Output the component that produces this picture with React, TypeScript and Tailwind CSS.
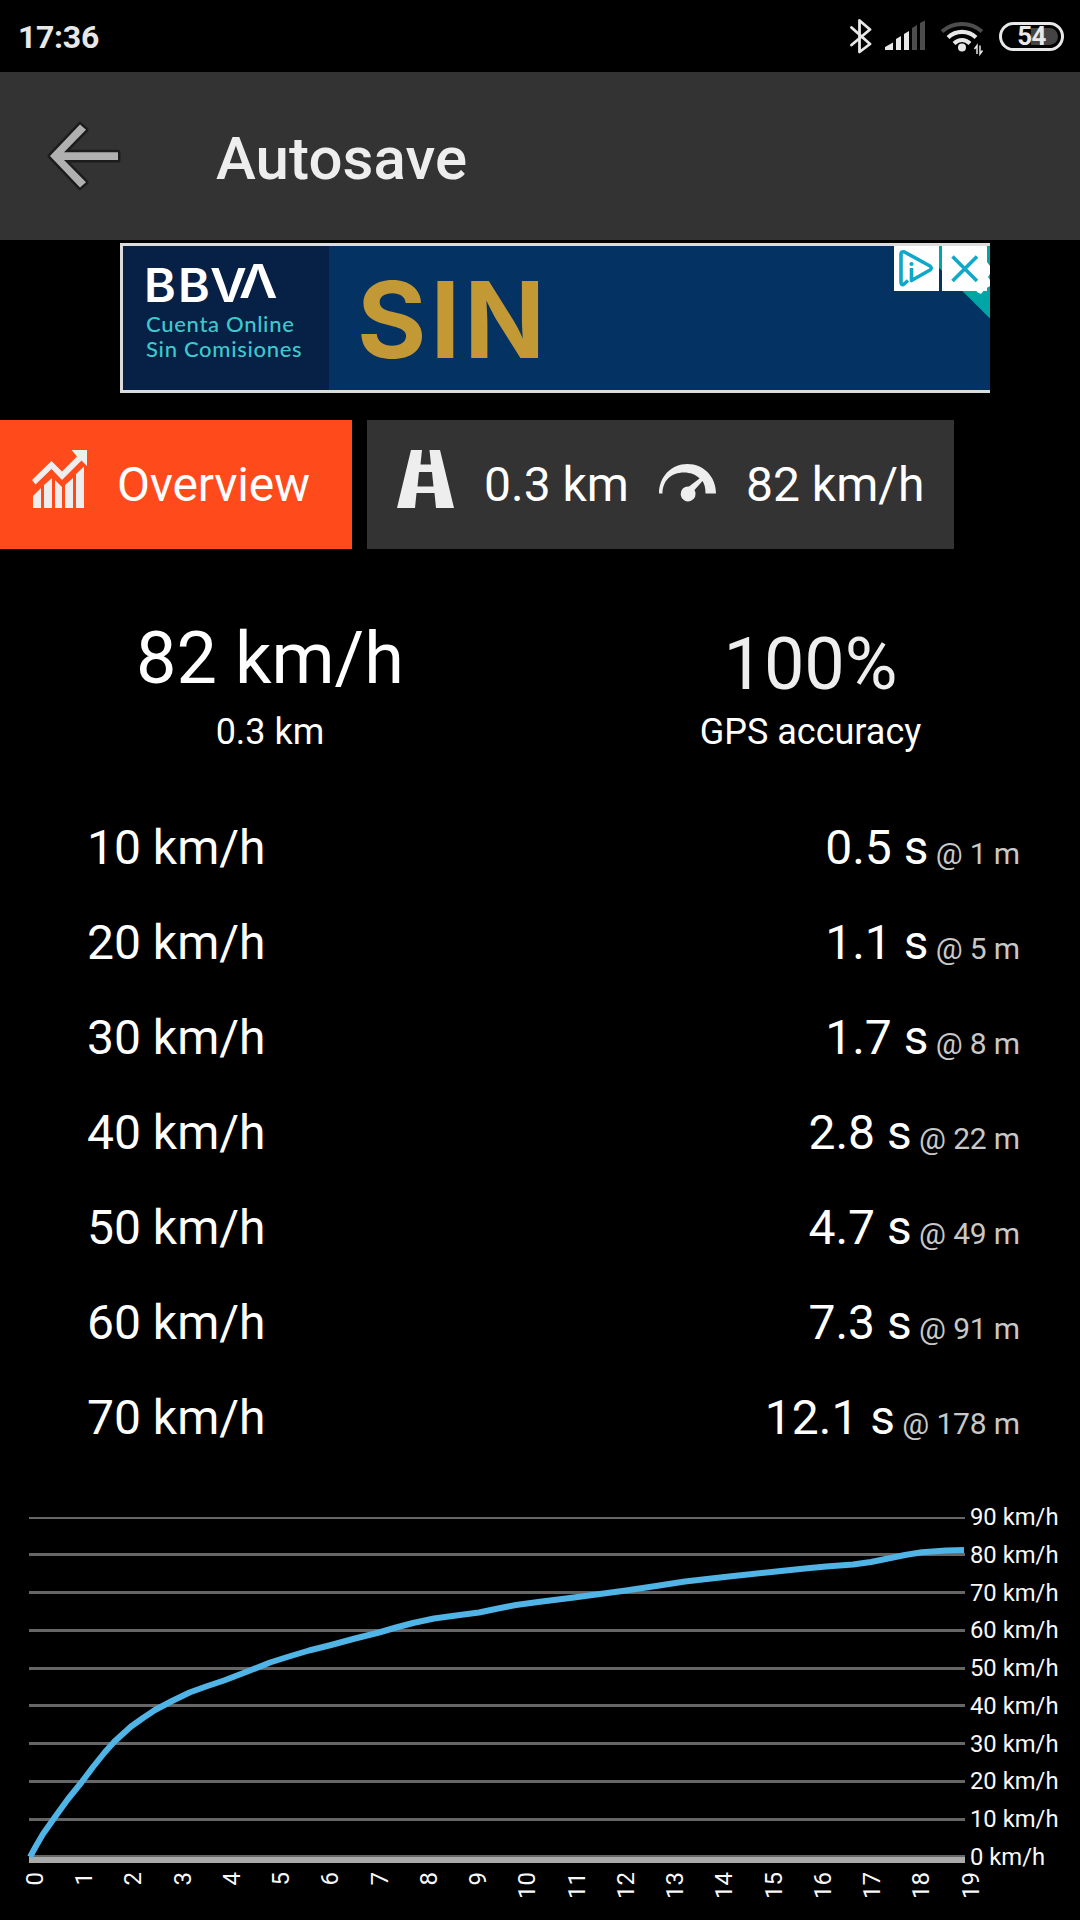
import React from 'react';

const SPLITS = [
  { speed: '10 km/h', time: '0.5 s', distance: '1 m' },
  { speed: '20 km/h', time: '1.1 s', distance: '5 m' },
  { speed: '30 km/h', time: '1.7 s', distance: '8 m' },
  { speed: '40 km/h', time: '2.8 s', distance: '22 m' },
  { speed: '50 km/h', time: '4.7 s', distance: '49 m' },
  { speed: '60 km/h', time: '7.3 s', distance: '91 m' },
  { speed: '70 km/h', time: '12.1 s', distance: '178 m' },
];

// y = top edge of the grid line inside the chart
const GRID = [
  { label: '90 km/h', y: 17, h: 2 },
  { label: '80 km/h', y: 53, h: 3 },
  { label: '70 km/h', y: 91, h: 3 },
  { label: '60 km/h', y: 129, h: 3 },
  { label: '50 km/h', y: 167, h: 3 },
  { label: '40 km/h', y: 204, h: 3 },
  { label: '30 km/h', y: 242, h: 3 },
  { label: '20 km/h', y: 280, h: 3 },
  { label: '10 km/h', y: 318, h: 3 },
  { label: '0 km/h', y: 355, h: 2 },
];

const SPEED_LINE =
  '30,357 36,346 43,334 55,317 68,299 81,283 93,267 105,252 115,241 131,226.5 143,218 155,210 172,201 189.5,192.5 206,186.5 224,180.5 250,170.5 270,162.5 289,156.5 309,150.5 331,145 355,138.5 379,132.5 396,127.5 413,123 434,118.5 456,115.5 479,112.5 498,108.5 516,105 540,101.8 574,97.5 600,94 626,90.5 656,86 685,81.5 729,76.5 781,71 805,68.5 826,66.5 853,64.5 871,62 888,58.5 905,55 922,52.3 946,50.5 964,50';

function StatusBar() {
  return (
    <div className="flex h-[72px] items-center justify-between pl-[18px] pr-[16px]">
      <span className="pt-[2px] text-[32px] leading-none font-bold tracking-[-0.3px] text-[#e8e8e8]">17:36</span>
      <div className="flex items-center">
        <svg width="149" height="40" viewBox="850 16 149 40" fill="none">
          {/* Bluetooth */}
          <path d="M851.5 27.5 870 44 859.5 52V20.5L870 29.5 851.5 45" stroke="#e8e8e8" strokeWidth="2.8" strokeLinejoin="round" strokeLinecap="round" />
          {/* Signal */}
          <path d="M885 50v-3l8-4.5v7.5ZM896 50V39l5-3v14ZM904 50V34l5-3v19Z" fill="#e8e8e8" />
          <path d="M912 50V28l5-3v25ZM920 50V23l5-2.5V50Z" fill="#4d4d4d" />
          {/* Wifi */}
          <path d="M942 31.5C953.5 21.5 970.5 21.5 982 31.5" stroke="#4d4d4d" strokeWidth="4" />
          <path d="M948 37.5C956 30 968 30 976 37.5M954 43.5C959 39 965 39 970 43.5" stroke="#e8e8e8" strokeWidth="4.2" />
          <circle cx="962" cy="47.5" r="4" fill="#e8e8e8" />
          <path d="M977 54V45.5L974.5 49M980 45.5V54L982.5 50.5" stroke="#e8e8e8" strokeWidth="1.5" />
        </svg>
        <div className="relative flex h-[29px] w-[65px] items-center justify-center rounded-full border-[3px] border-[#e8e8e8]">
          <div className="absolute top-[3px] right-[3px] h-[17px] w-[27px] rounded-r-full bg-[#444444]" />
          <span className="relative text-[26px] leading-none font-bold tracking-[-0.6px] text-[#e8e8e8]">54</span>
        </div>
      </div>
    </div>
  );
}

function Header() {
  return (
    <header className="flex h-[168px] items-center bg-[#333333] pl-[44px]">
      <svg width="80" height="80" viewBox="44 116 80 80" fill="none">
        <path d="M50 156 80 124.500 86 129.800 64 152.200H118V160H64L86 182.200 80 187.500Z" fill="#b0b0b0" stroke="#1c1c1c" strokeWidth="5" strokeLinejoin="round" />
        <path d="M50 156 80 124.500 86 129.800 64 152.200H118V160H64L86 182.200 80 187.500Z" fill="#b0b0b0" />
      </svg>
      <h1 className="pt-[6px] pl-[92px] text-[60px] leading-none font-medium tracking-[0.1px] text-[#eeeeee]">Autosave</h1>
    </header>
  );
}

function AdBanner() {
  return (
    <div className="relative mt-[3px] ml-[120px] flex h-[150px] w-[870px] overflow-hidden border-y-[3px] border-l-[3px] border-[#dcdcdc] bg-[#043263]">
      <div className="w-[206px] bg-[#072146] pl-[21px]">
        <div className="flex pt-[15px] font-['Inter'] text-[46px] leading-[48px] font-semibold text-white">
          <span className="w-[34px] origin-left scale-x-105">B</span>
          <span className="w-[32px] origin-left scale-x-105">B</span>
          <span className="w-[29px] origin-left scale-x-110">V</span>
          <span className="-mt-[4px] origin-left scale-x-115">Λ</span>
        </div>
        <p className="pt-[2px] pl-[2px] font-['Lato'] text-[22px] leading-[25px] font-medium tracking-[0.7px] whitespace-nowrap text-[#3fc8cc]">
          Cuenta Online
          <br />
          Sin Comisiones
        </p>
      </div>
      <span className="pt-[20px] pl-[28px] font-['Inter'] text-[106px] leading-[108px] font-bold tracking-[4px] text-[#c39936]">SIN</span>
      <svg className="absolute top-0 right-0" width="96" height="75" viewBox="894 246 96 75" fill="none">
        <path d="M917 246H990V318.5Z" fill="#00a6a6" />
        <path d="M975 288V262H987L990 266V274L988 277 990 280V286L985 289 981 294 977 292Z" fill="#fff" />
        <path d="M894 246h45v45h-45zM942 246h45v45h-45z" fill="#fff" />
        <path d="M908 280.5 903.5 284.5Q901 285 901 282V254Q901 251 904.5 252L930 266Q932.5 268.5 930 270L911.5 280.5V268" stroke="#0fa8c8" strokeWidth="3.6" strokeLinejoin="round" />
        <circle cx="911.5" cy="264" r="2.1" fill="#0fa8c8" />
        <path d="M952.5 256.5 977 281M977 256.5 952.5 281" stroke="#0fa8c8" strokeWidth="3.6" />
      </svg>
    </div>
  );
}

function Tabs() {
  return (
    <div className="mt-[27px] flex h-[129px] gap-[15px] text-[48px] leading-none text-white">
      <div className="flex w-[352px] items-center gap-[30px] bg-[#ff4a1c] pl-[30px]">
        <svg className="mb-[11px] shrink-0" width="57" height="58" viewBox="30 450 57 58" fill="#eeeeee">
          <path d="M33 508V496L41 488V508ZM44 508V485L52 478V508ZM55 508V480L62 487V508ZM65 508V485L73 478V508ZM76 508V474L84 466.5V508Z" />
          <path d="M32 480 51.5 461 62 471.5 77 456.5 71.5 450H87V466L81.5 460.5 62 480 51.5 469 35.5 484.5Z" />
        </svg>
        <span className="tracking-[-0.2px]">Overview</span>
      </div>
      <div className="flex w-[587px] items-center bg-[#333333] pl-[30px]">
        <svg className="mb-[11px] shrink-0" width="57" height="58" viewBox="397 450 57 58" fill="#eeeeee">
          <path d="M411 450H422L420.5 464.5H431L429.5 450H440L454 508H436L434.5 493H416.5L415 508H397ZM419 472 417.5 486.5H433.5L432 472Z" fillRule="evenodd" />
        </svg>
        <span className="w-[176px] pl-[30px] whitespace-nowrap">0.3 km</span>
        <svg className="mb-[11px] ml-[29px] shrink-0" width="57" height="58" viewBox="659 450 57 58" fill="#eeeeee">
          <path d="M659 493.5C659 477 671 464 687.5 464S716 477 716 493.5H705.5C705.5 488 704.5 484 702.5 481L694.5 490A7.5 7.5 0 1 1 689 486.5L699.5 478.5C696 474.5 690 472.5 684 472.5 671 472.5 662.5 481 662.5 493.5Z" />
        </svg>
        <span className="pl-[30px] whitespace-nowrap">82 km/h</span>
      </div>
    </div>
  );
}

function SpeedChart() {
  return (
    <svg className="mt-[35px] block font-['Roboto']" width="1080" height="420" viewBox="0 0 1080 420">
      {GRID.map((line, i) => (
        <g key={line.label}>
          <rect x="29" y={line.y} width="936" height={line.h} fill="#666666" />
          <text x="970" y={25.2 + i * 37.75} fontSize="23.8" fill="#f8f8f8">{line.label}</text>
        </g>
      ))}
      <rect x="29" y="357" width="936" height="6" fill="#aaaaaa" />
      <polyline points={SPEED_LINE} fill="none" stroke="#50b4e6" strokeWidth="6" strokeLinejoin="round" />
      {Array.from({ length: 20 }, (_, sec) => (
        <text key={sec} transform={`translate(${42.8 + sec * 49.26} 372) rotate(-90)`} textAnchor="end" fontSize="24" fill="#f8f8f8">
          {sec}
        </text>
      ))}
    </svg>
  );
}

export default function App() {
  return (
    <div className="h-[1920px] w-[1080px] overflow-hidden bg-black font-['Roboto',sans-serif] text-white">
      <StatusBar />
      <Header />
      <AdBanner />
      <Tabs />

      {/* Summary */}
      <section className="grid h-[251px] grid-cols-2 text-center">
        <div className="pt-[74px]">
          <p className="text-[72px] leading-none">82 km/h</p>
          <p className="mt-[19px] text-[36px] leading-none">0.3 km</p>
        </div>
        <div className="pt-[80px]">
          <p className="pl-[1px] text-[72px] leading-none text-[#eeeeee]">100%</p>
          <p className="mt-[13px] pl-[1px] text-[36px] leading-none">GPS accuracy</p>
        </div>
      </section>

      {/* Split times */}
      <section className="pr-[60px] pl-[87px] text-[48px] leading-[95px]">
        {SPLITS.map((split) => (
          <div key={split.speed} className="flex h-[95px] items-baseline justify-between">
            <span>{split.speed}</span>
            <span>
              {split.time}
              <span className="text-[30px] leading-none tracking-[-0.15px] text-[#c8c8c8]"> @ {split.distance}</span>
            </span>
          </div>
        ))}
      </section>

      <SpeedChart />
    </div>
  );
}
